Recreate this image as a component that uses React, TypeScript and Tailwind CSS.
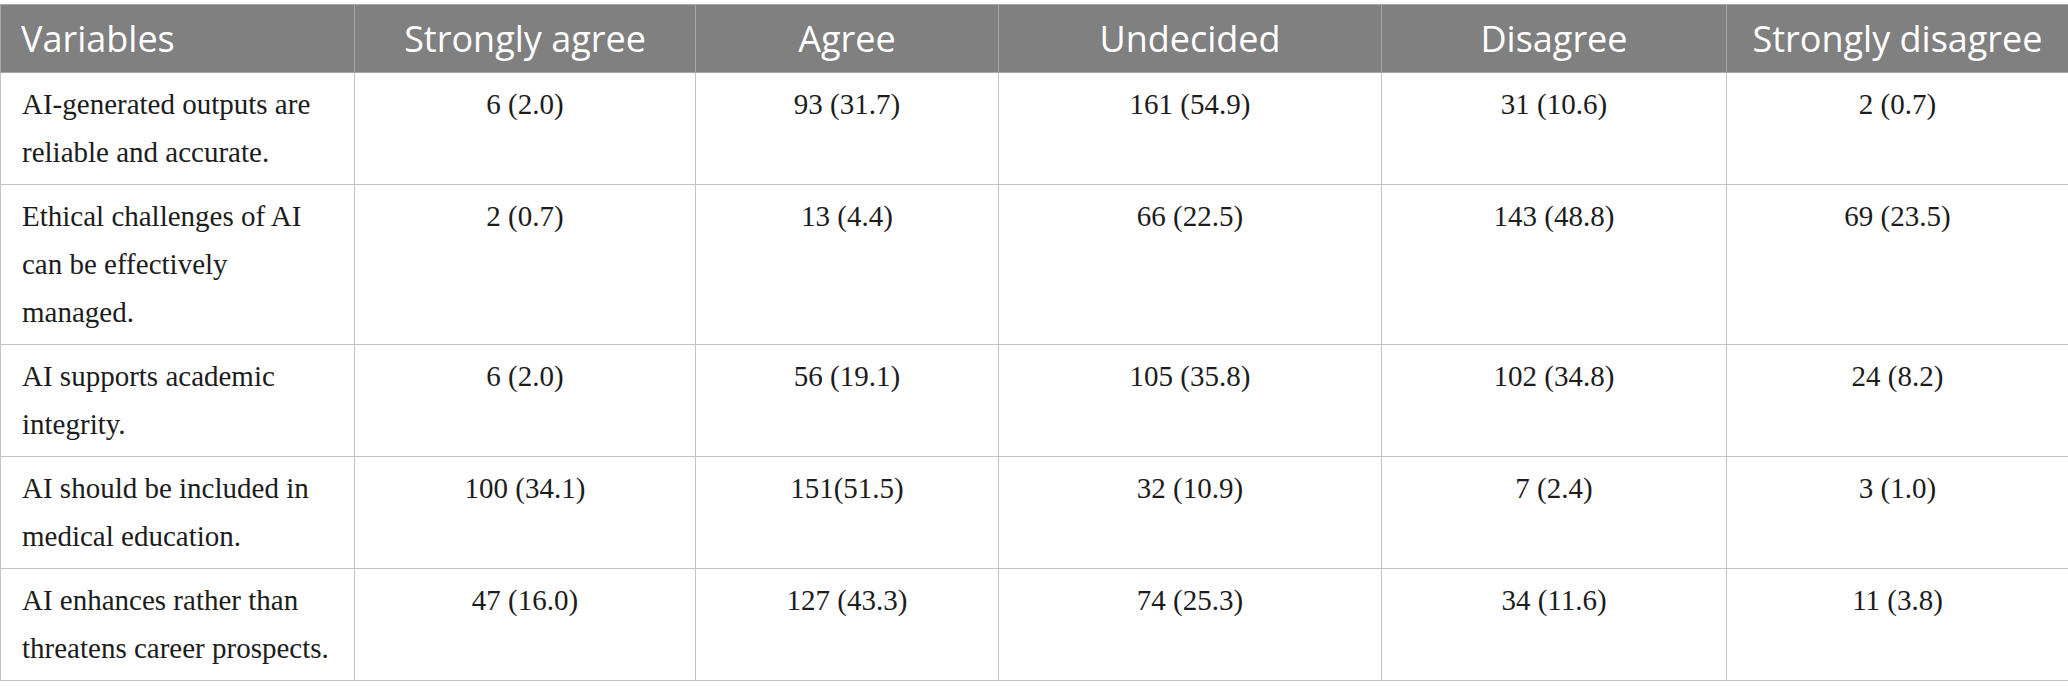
const headers = ['Variables', 'Strongly agree', 'Agree', 'Undecided', 'Disagree', 'Strongly disagree'];

const rows: { label: string[]; values: string[] }[] = [
  { label: ['AI-generated outputs are', 'reliable and accurate.'], values: ['6 (2.0)', '93 (31.7)', '161 (54.9)', '31 (10.6)', '2 (0.7)'] },
  { label: ['Ethical challenges of AI', 'can be effectively', 'managed.'], values: ['2 (0.7)', '13 (4.4)', '66 (22.5)', '143 (48.8)', '69 (23.5)'] },
  { label: ['AI supports academic', 'integrity.'], values: ['6 (2.0)', '56 (19.1)', '105 (35.8)', '102 (34.8)', '24 (8.2)'] },
  { label: ['AI should be included in', 'medical education.'], values: ['100 (34.1)', '151(51.5)', '32 (10.9)', '7 (2.4)', '3 (1.0)'] },
  { label: ['AI enhances rather than', 'threatens career prospects.'], values: ['47 (16.0)', '127 (43.3)', '74 (25.3)', '34 (11.6)', '11 (3.8)'] },
];

const widths = ['w-[354px]', 'w-[341px]', 'w-[303px]', 'w-[383px]', 'w-[345px]', 'w-[342px]'];

export default function App() {
  return (
    <div className="w-[2068px] h-[698px] bg-white pt-[4px]">
      <table className="w-[2068px] table-fixed border-collapse">
        <colgroup>
          {widths.map((w, i) => (
            <col key={i} className={w} />
          ))}
        </colgroup>
        <thead>
          <tr className="h-[68px] bg-[#808080]">
            {headers.map((h, i) => (
              <th
                key={h}
                className={`border border-[#a6a6a6] px-[20px] font-['Open_Sans',sans-serif] text-[36px] font-normal leading-none text-white ${
                  i === 0 ? 'text-left' : 'text-center'
                }`}
              >
                {h}
              </th>
            ))}
          </tr>
        </thead>
        <tbody className="font-['Liberation_Serif',serif] text-[29px] leading-[48px] text-[#1c1c1c]">
          {rows.map((r, ri) => (
            <tr key={ri}>
              <td className="border border-[#c2c2c2] px-[21px] pt-[7px] pb-[8px] align-top">
                {r.label.map((l, li) => (
                  <div key={li} className="whitespace-nowrap">{l}</div>
                ))}
              </td>
              {r.values.map((v, vi) => (
                <td key={vi} className="border border-[#c2c2c2] pt-[7px] pb-[8px] text-center align-top">
                  {v}
                </td>
              ))}
            </tr>
          ))}
        </tbody>
      </table>
    </div>
  );
}
